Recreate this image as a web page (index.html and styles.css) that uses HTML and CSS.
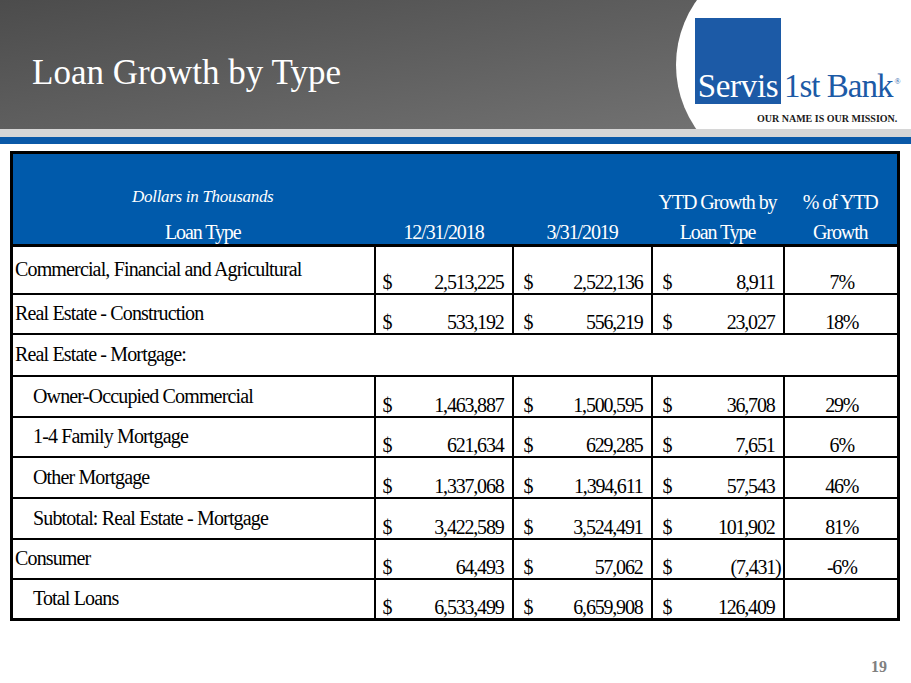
FILE: index.html
```html
<!DOCTYPE html>
<html lang="en">
<head>
<meta charset="utf-8">
<title>Loan Growth by Type</title>
<link rel="stylesheet" href="styles.css">
</head>
<body>
<div class="slide">
  <header class="top">
    <h1 class="title">Loan Growth by Type</h1>
    <div class="logo-bg"></div>
    <div class="logo">
      <div class="logo-row">
        <span class="logo-box">Servis</span>
        <span class="logo-name">1st Bank<sup class="reg">®</sup></span>
      </div>
      <div class="tagline">OUR NAME IS OUR MISSION.</div>
    </div>
  </header>
  <div class="stripe-gray"></div>
  <div class="stripe-blue"></div>

  <main class="content">
    <table class="loans">
      <colgroup>
        <col class="c-label">
        <col class="c-n1">
        <col class="c-n2">
        <col class="c-n3">
        <col class="c-pct">
      </colgroup>
      <thead>
        <tr class="h-head">
          <th class="th-label">
            <div class="units">Dollars in Thousands</div>
            <div class="hl">Loan Type</div>
          </th>
          <th><div class="hl">12/31/2018</div></th>
          <th><div class="hl">3/31/2019</div></th>
          <th><div class="hl1">YTD Growth by</div><div class="hl">Loan Type</div></th>
          <th><div class="hl1">% of YTD</div><div class="hl">Growth</div></th>
        </tr>
      </thead>
      <tbody>
        <tr class="h48">
          <td class="lbl">Commercial, Financial and Agricultural</td>
          <td class="num n1"><div class="amt"><span>$</span><span>2,513,225</span></div></td>
          <td class="num"><div class="amt"><span>$</span><span>2,522,136</span></div></td>
          <td class="num"><div class="amt"><span>$</span><span>8,911</span></div></td>
          <td class="pct">7%</td>
        </tr>
        <tr class="h40">
          <td class="lbl">Real Estate - Construction</td>
          <td class="num n1"><div class="amt"><span>$</span><span>533,192</span></div></td>
          <td class="num"><div class="amt"><span>$</span><span>556,219</span></div></td>
          <td class="num"><div class="amt"><span>$</span><span>23,027</span></div></td>
          <td class="pct">18%</td>
        </tr>
        <tr class="h42">
          <td class="lbl" colspan="5">Real Estate - Mortgage:</td>
        </tr>
        <tr class="h41">
          <td class="lbl ind">Owner-Occupied Commercial</td>
          <td class="num n1"><div class="amt"><span>$</span><span>1,463,887</span></div></td>
          <td class="num"><div class="amt"><span>$</span><span>1,500,595</span></div></td>
          <td class="num"><div class="amt"><span>$</span><span>36,708</span></div></td>
          <td class="pct">29%</td>
        </tr>
        <tr class="h40">
          <td class="lbl ind">1-4 Family Mortgage</td>
          <td class="num n1"><div class="amt"><span>$</span><span>621,634</span></div></td>
          <td class="num"><div class="amt"><span>$</span><span>629,285</span></div></td>
          <td class="num"><div class="amt"><span>$</span><span>7,651</span></div></td>
          <td class="pct">6%</td>
        </tr>
        <tr class="h41">
          <td class="lbl ind">Other Mortgage</td>
          <td class="num n1"><div class="amt"><span>$</span><span>1,337,068</span></div></td>
          <td class="num"><div class="amt"><span>$</span><span>1,394,611</span></div></td>
          <td class="num"><div class="amt"><span>$</span><span>57,543</span></div></td>
          <td class="pct">46%</td>
        </tr>
        <tr class="h41">
          <td class="lbl ind">Subtotal: Real Estate - Mortgage</td>
          <td class="num n1"><div class="amt"><span>$</span><span>3,422,589</span></div></td>
          <td class="num"><div class="amt"><span>$</span><span>3,524,491</span></div></td>
          <td class="num"><div class="amt"><span>$</span><span>101,902</span></div></td>
          <td class="pct">81%</td>
        </tr>
        <tr class="h40">
          <td class="lbl">Consumer</td>
          <td class="num n1"><div class="amt"><span>$</span><span>64,493</span></div></td>
          <td class="num"><div class="amt"><span>$</span><span>57,062</span></div></td>
          <td class="num"><div class="amt"><span>$</span><span class="neg">(7,431)</span></div></td>
          <td class="pct">-6%</td>
        </tr>
        <tr class="h41">
          <td class="lbl ind">Total Loans</td>
          <td class="num n1"><div class="amt"><span>$</span><span>6,533,499</span></div></td>
          <td class="num"><div class="amt"><span>$</span><span>6,659,908</span></div></td>
          <td class="num"><div class="amt"><span>$</span><span>126,409</span></div></td>
          <td class="pct"></td>
        </tr>
      </tbody>
    </table>
  </main>

  <footer class="page-num">19</footer>
</div>
</body>
</html>
```

FILE: styles.css
```css
* { box-sizing: border-box; }

html, body {
  margin: 0;
  padding: 0;
  background: #fff;
}

body {
  font-family: "Liberation Serif", "Times New Roman", serif;
  color: #000;
}

.slide {
  width: 911px;
  height: 683px;
  overflow: hidden;
  position: relative;
}

/* ---------- header ---------- */
.top {
  position: relative;
  height: 129px;
  overflow: hidden;
  background: linear-gradient(170deg, #4c4c4c 0%, #5f5f5f 45%, #777 100%);
}

.title {
  margin: 0;
  padding: 53px 0 0 32px;
  font-family: "Liberation Serif", "Times New Roman", serif;
  font-weight: normal;
  font-size: 35px;
  line-height: 40px;
  color: #fff;
}

.logo-bg {
  position: absolute;
  left: 676px;
  top: -46px;
  width: 260px;
  height: 222px;
  background: #fff;
  border-radius: 111px 0 0 111px;
}

.logo {
  position: absolute;
  left: 695px;
  top: 18px;
}

.logo-row {
  display: flex;
  align-items: baseline;
}

.logo-box {
  display: block;
  width: 86px;
  height: 86px;
  padding-top: 52px;
  background: #1c5aa6;
  color: #fff;
  font-size: 33px;
  line-height: 33px;
  text-align: center;
  letter-spacing: -0.3px;
}

.logo-name {
  margin-left: 3px;
  color: #1c5aa6;
  font-size: 33px;
  line-height: 33px;
  letter-spacing: -1px;
  white-space: nowrap;
}

.reg {
  font-size: 8px;
  vertical-align: 13px;
  margin-left: 2px;
  line-height: 0;
}

.tagline {
  margin-top: 9px;
  padding-left: 62px;
  font-size: 10px;
  line-height: 12px;
  font-weight: bold;
  color: #1a1a1a;
  letter-spacing: 0;
  white-space: nowrap;
}

.stripe-gray {
  height: 8px;
  background: #d6d6d6;
}

.stripe-blue {
  height: 7px;
  background: #0a59a8;
}

/* ---------- table ---------- */
.content {
  padding: 7px 0 0 10px;
}

.loans {
  border-collapse: collapse;
  table-layout: fixed;
  width: 890px;
  border: 3px solid #000;
  font-size: 20px;
}

.c-label { width: 363px; }
.c-n1 { width: 138px; }
.c-n2 { width: 139px; }
.c-n3 { width: 132px; }
.c-pct { width: 115px; }

.loans th,
.loans td {
  padding: 0;
  border: 2px solid #000;
}

.loans thead th {
  background: #005aab;
  color: #fff;
  font-weight: normal;
  border: none;
  border-bottom: 3px solid #000;
  vertical-align: bottom;
  text-align: center;
  letter-spacing: -1.1px;
}

.h-head { height: 93px; }
.h48 { height: 48px; }
.h40 { height: 40px; }
.h41 { height: 41px; }
.h42 { height: 42px; }

.th-label {
  padding-left: 18px !important;
}

.units {
  font-style: italic;
  font-size: 17px;
  line-height: 20px;
  letter-spacing: -0.3px;
  margin-bottom: 13px;
}

.hl {
  line-height: 24px;
}

.hl1 {
  line-height: 24px;
  margin-bottom: 6px;
}

.lbl {
  vertical-align: middle;
  padding-left: 2px !important;
  letter-spacing: -0.85px;
  white-space: nowrap;
}

.lbl.ind {
  padding-left: 20px !important;
}

.num {
  vertical-align: bottom;
  padding: 0 8px 1px 10px !important;
  line-height: 20px;
  letter-spacing: -1.2px;
}

.num.n1 {
  padding-left: 7px !important;
}

.amt {
  display: flex;
  justify-content: space-between;
}

.neg {
  margin-right: -6px;
}

.pct {
  vertical-align: bottom;
  text-align: center;
  padding: 0 0 1px 2px !important;
  line-height: 20px;
  letter-spacing: -1.2px;
}

/* ---------- footer ---------- */
.page-num {
  margin-top: 36px;
  padding-right: 24px;
  text-align: right;
  font-size: 16px;
  line-height: 20px;
  font-weight: bold;
  color: #808080;
}
```
